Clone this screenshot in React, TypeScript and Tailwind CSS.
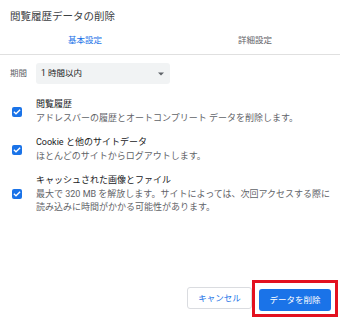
import React from "react";

const items = [
  {
    id: "history",
    title: "閲覧履歴",
    lines: ["アドレスバーの履歴とオートコンプリート データを削除します。"],
  },
  {
    id: "cookies",
    title: "Cookie と他のサイトデータ",
    lines: ["ほとんどのサイトからログアウトします。"],
  },
  {
    id: "cache",
    title: "キャッシュされた画像とファイル",
    lines: [
      "最大で 320 MB を解放します。サイトによっては、次回アクセスする際に",
      "読み込みに時間がかかる可能性があります。",
    ],
  },
];

function CheckBox() {
  return (
    <div className="w-[10px] h-[10px] rounded-[2px] bg-[#1a73e8] flex items-center justify-center shrink-0">
      <svg className="w-[8px] h-[8px]" viewBox="0 0 24 24" fill="none" stroke="#fff" strokeWidth={4}>
        <path strokeLinecap="square" d="M4 12.5l5 5L20 6.5" />
      </svg>
    </div>
  );
}

export default function App() {
  return (
    <div
      className="w-[340px] h-[318px] bg-white flex flex-col text-[#202124]"
      style={{ fontFamily: 'Roboto, "Noto Sans CJK JP", sans-serif' }}
    >
      <h1 className="px-[10px] pt-[9px] text-[10.5px] leading-[16px] font-normal text-[#3c4043]">閲覧履歴データの削除</h1>

      <div className="flex h-[29px] mt-[1px] border-b border-[#e0e0e0]">
        <div className="flex-1 flex items-center justify-center text-[8.5px] text-[#1a73e8]">基本設定</div>
        <div className="flex-1 flex items-center justify-center text-[8.5px] text-[#5f6368]">詳細設定</div>
      </div>

      <div className="flex items-center mt-[8px] px-[10px] gap-[9px]">
        <span className="text-[8.5px] text-[#5f6368]">期間</span>
        <div className="w-[134px] h-[21px] rounded-[3px] bg-[#f1f3f4] flex items-center justify-between pl-[5px] pr-[6px]">
          <span className="text-[8.5px]">1 時間以内</span>
          <svg className="w-[6px] h-[4px]" viewBox="0 0 10 5">
            <path d="M0 0h10L5 5z" fill="#5f6368" />
          </svg>
        </div>
      </div>

      <div className="flex flex-col gap-[11px] mt-[14px] pl-[12px]">
        {items.map((item) => (
          <div key={item.id} className="flex items-center gap-[14px]">
            <CheckBox />
            <div className="flex flex-col text-[9px] leading-[13.5px]">
              <span>{item.title}</span>
              {item.lines.map((line) => (
                <span key={line} className="text-[#5f6368] whitespace-nowrap">
                  {line}
                </span>
              ))}
            </div>
          </div>
        ))}
      </div>

      <div className="mt-auto flex items-center justify-end pr-[2px] pb-[1px]">
        <button className="w-[65px] h-[22px] border border-[#dadce0] rounded-[3px] bg-white text-[8.5px] text-[#1a73e8]">
          キャンセル
        </button>
        <div className="border-[3px] border-[#e3101f] px-[4px] py-[3px]">
          <button className="w-[72px] h-[22px] rounded-[3px] bg-[#1a73e8] text-white text-[8.5px]">
            データを削除
          </button>
        </div>
      </div>
    </div>
  );
}
